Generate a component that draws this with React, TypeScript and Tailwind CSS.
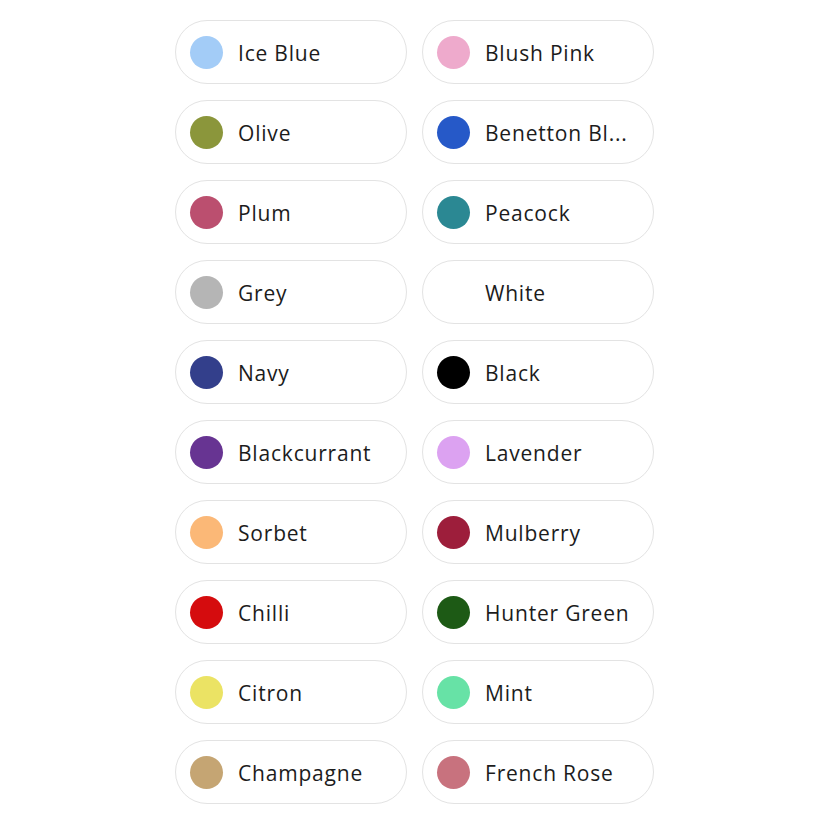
const colours: { name: string; hex: string | null }[] = [
  { name: 'Ice Blue', hex: '#a3ccf7' },
  { name: 'Blush Pink', hex: '#eeaacc' },
  { name: 'Olive', hex: '#8b963b' },
  { name: 'Benetton Bl...', hex: '#2659c8' },
  { name: 'Plum', hex: '#bb4f6f' },
  { name: 'Peacock', hex: '#2b8893' },
  { name: 'Grey', hex: '#b5b5b5' },
  { name: 'White', hex: null },
  { name: 'Navy', hex: '#333f8b' },
  { name: 'Black', hex: '#000000' },
  { name: 'Blackcurrant', hex: '#673492' },
  { name: 'Lavender', hex: '#dca2f1' },
  { name: 'Sorbet', hex: '#fbb877' },
  { name: 'Mulberry', hex: '#9d1e3b' },
  { name: 'Chilli', hex: '#d50c0e' },
  { name: 'Hunter Green', hex: '#1d5a15' },
  { name: 'Citron', hex: '#ebe364' },
  { name: 'Mint', hex: '#67e2a6' },
  { name: 'Champagne', hex: '#c5a573' },
  { name: 'French Rose', hex: '#c8727e' },
];

export default function App() {
  return (
    <div className="min-h-[826px] bg-white pt-5 pl-[175px]" style={{ fontFamily: '"Open Sans", "Liberation Sans", sans-serif' }}>
      <div className="grid grid-cols-[232px_232px] gap-x-[15px] gap-y-4">
        {colours.map(c => (
          <div
            key={c.name}
            className="flex h-16 items-center gap-[15px] rounded-full border border-[#e3e3e3] bg-white pl-[14px] pr-2"
          >
            <span
              className="h-[33px] w-[33px] shrink-0 rounded-full"
              style={{ backgroundColor: c.hex ?? '#ffffff' }}
            />
            <span className="truncate pt-[3px] text-[21px] font-medium tracking-[0.8px] text-[#1c1c1c]">{c.name}</span>
          </div>
        ))}
      </div>
    </div>
  );
}
